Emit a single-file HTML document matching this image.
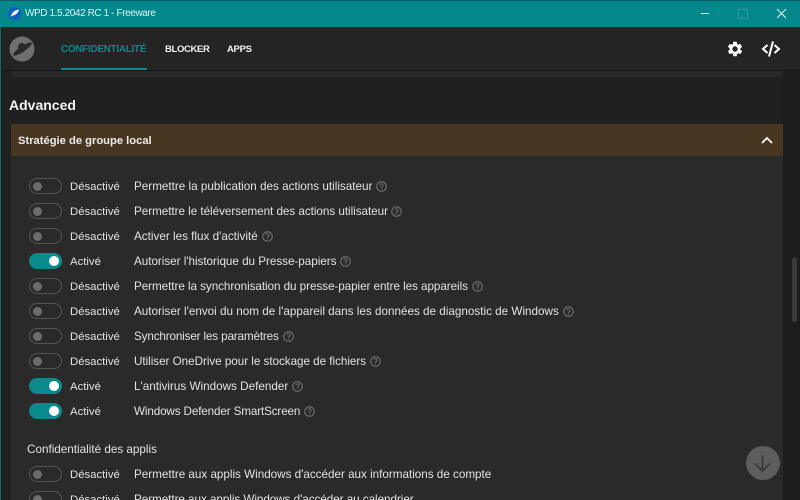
<!DOCTYPE html>
<html lang="fr">
<head>
<meta charset="utf-8">
<title>WPD</title>
<style>
html,body{margin:0;padding:0;width:800px;height:500px;overflow:hidden;background:#1e1e1e;font-family:"Liberation Sans",sans-serif;color:#e6e6e6}
#w{position:relative;width:800px;height:500px;overflow:hidden;background:#1e1e1e}
.a{position:absolute}
.t{position:absolute;white-space:nowrap;font-size:11.7px;line-height:14px;color:#e2e2e2}
.s{font-size:11.35px}
.sw{position:absolute;left:29px;width:33px;height:16px;box-sizing:border-box;border-radius:8px;border:1px solid #555}
.sw i{position:absolute;left:3px;top:2.500px;width:9px;height:9px;border-radius:50%;background:#6c6c6c}
.sw.on{background:#0a8a8c;border-color:#0a8a8c}
.sw.on i{left:19px;top:2px;width:10px;height:10px;background:#fff}
svg{position:absolute;overflow:visible}
</style>
</head>
<body>
<div id="w">
<div class="a" style="left:0;top:0;width:800px;height:27px;background:#05888c"></div>
<div class="a" style="left:0;top:0;width:800px;height:1px;background:#0b5c68"></div>
<svg style="left:8px;top:7px" width="13" height="13" viewBox="0 0 13 13"><circle cx="6.500" cy="6.500" r="6.500" fill="#0f5fc0"/><path d="M2.500 10C3.500 6 6.500 3.200 11 2.500 10 6 7.500 8.500 4.500 8.500Z" fill="#fff"/></svg>
<div class="t" style="left:25px;top:7px;font-size:10px;letter-spacing:-.4px;color:#dff3f3">WPD 1.5.2042 RC 1 - Freeware</div>
<div class="a" style="left:701px;top:13px;width:8px;height:1px;background:#d8eeee"></div>
<div class="a" style="left:738px;top:9px;width:8px;height:8px;border:1px solid #2f9a9d"></div>
<svg style="left:777px;top:9px" width="9" height="9" viewBox="0 0 9 9"><path d="M0 0L9 9M9 0L0 9" stroke="#e2f2f2" stroke-width="1"/></svg>

<div class="a" style="left:0;top:27px;width:800px;height:43px;background:#242424"></div>
<div class="a" style="left:0;top:70px;width:800px;height:1px;background:#171717"></div>
<svg style="left:9px;top:36px" width="26" height="26" viewBox="0 0 26 26"><circle cx="13" cy="13" r="12.500" fill="#6f6f6f"/><ellipse cx="13.500" cy="13" rx="11" ry="2.800" transform="rotate(-34 13.500 13)" fill="#2a2a2a"/><ellipse cx="13" cy="11" rx="4" ry="4" transform="rotate(-34 13 11)" fill="#2a2a2a"/></svg>
<div class="t" style="left:61px;top:43px;font-size:9.800px;letter-spacing:-.2px;font-weight:bold;color:#0a8a8c">CONFIDENTIALITÉ</div>
<div class="a" style="left:61px;top:68px;width:86px;height:2px;background:#0a8a8c"></div>
<div class="t" style="left:165px;top:43px;font-size:9.500px;letter-spacing:-.35px;font-weight:bold;color:#f2f2f2">BLOCKER</div>
<div class="t" style="left:227px;top:43px;font-size:9.500px;letter-spacing:-.3px;font-weight:bold;color:#f2f2f2">APPS</div>
<svg style="left:726px;top:40px" width="18" height="18" viewBox="0 0 24 24"><path fill="#fff" d="M19.140 12.940c.04-.3.06-.61.06-.94s-.02-.64-.07-.94l2.030-1.580a.49.49 0 0 0 .12-.61l-1.920-3.320a.49.49 0 0 0-.59-.22l-2.390.96a7 7 0 0 0-1.620-.94l-.36-2.540a.48.48 0 0 0-.48-.41h-3.840a.48.48 0 0 0-.47.41l-.36 2.540a7.300 7.300 0 0 0-1.620.94l-2.390-.96a.49.49 0 0 0-.59.22L2.740 8.870a.48.48 0 0 0 .12.61l2.030 1.580c-.05.3-.07.62-.07.94s.02.64.07.94l-2.030 1.580a.49.49 0 0 0-.12.61l1.920 3.320c.12.22.37.29.59.22l2.390-.96c.5.380 1.030.7 1.620.94l.36 2.540c.05.24.24.41.48.41h3.840c.24 0 .44-.17.47-.41l.36-2.540a7 7 0 0 0 1.620-.94l2.390.96c.22.08.47 0 .59-.22l1.920-3.320a.48.48 0 0 0-.12-.61l-2.010-1.580zM12 15.600A3.600 3.600 0 1 1 12 8.400a3.600 3.600 0 0 1 0 7.200z"/></svg>
<svg style="left:761px;top:40px" width="20" height="18" viewBox="0 0 20 18"><path d="M6.500 5L2 9l4.500 4M13.500 5L18 9l-4.500 4M12 1.500L8 16.500" fill="none" stroke="#fff" stroke-width="2"/></svg>

<div class="a" style="left:0;top:27px;width:1px;height:473px;background:#0a6a6c"></div>
<div class="a" style="left:1px;top:71px;width:782px;height:429px;background:#202020"></div>
<div class="a" style="left:11px;top:71px;width:772px;height:6px;background:#282828;border-radius:0 0 3px 3px"></div>
<div class="a" style="left:783px;top:71px;width:17px;height:429px;background:#1d1d1d"></div>
<div class="a" style="left:792px;top:257px;width:5px;height:65px;background:#3a3a3a;border-radius:3px"></div>
<div class="t" style="left:9px;top:97px;font-size:14px;line-height:17px;font-weight:bold;color:#f4f4f4">Advanced</div>

<div class="a" style="left:11px;top:124px;width:772px;height:32px;background:#483720"></div>
<div class="t" style="left:18px;top:134px;font-size:11.200px;font-weight:bold;color:#ececec">Stratégie de groupe local</div>
<svg style="left:761px;top:136px" width="12" height="8" viewBox="0 0 12 8"><path d="M1 7L6 2l5 5" fill="none" stroke="#fff" stroke-width="1.700"/></svg>
<div class="a" style="left:11px;top:156px;width:772px;height:344px;background:#2a2a2a"></div>

<div class="sw" style="top:178px"><i></i></div><div class="t s" style="left:70px;top:180px">Désactivé</div><div class="t" style="left:134px;top:180px">Permettre la publication des actions utilisateur</div>
<div class="sw" style="top:203px"><i></i></div><div class="t s" style="left:70px;top:205px">Désactivé</div><div class="t" style="left:134px;top:205px;letter-spacing:-.04px">Permettre le téléversement des actions utilisateur</div>
<div class="sw" style="top:228px"><i></i></div><div class="t s" style="left:70px;top:230px">Désactivé</div><div class="t" style="left:134px;top:230px">Activer les flux d'activité</div>
<div class="sw on" style="top:253px"><i></i></div><div class="t s" style="left:70px;top:255px">Activé</div><div class="t" style="left:134px;top:255px;letter-spacing:-.03px">Autoriser l'historique du Presse-papiers</div>
<div class="sw" style="top:278px"><i></i></div><div class="t s" style="left:70px;top:280px">Désactivé</div><div class="t" style="left:134px;top:280px;letter-spacing:-.06px">Permettre la synchronisation du presse-papier entre les appareils</div>
<div class="sw" style="top:303px"><i></i></div><div class="t s" style="left:70px;top:305px">Désactivé</div><div class="t" style="left:134px;top:305px">Autoriser l'envoi du nom de l'appareil dans les données de diagnostic de Windows</div>
<div class="sw" style="top:328px"><i></i></div><div class="t s" style="left:70px;top:330px">Désactivé</div><div class="t" style="left:134px;top:330px;letter-spacing:-.15px">Synchroniser les paramètres</div>
<div class="sw" style="top:353px"><i></i></div><div class="t s" style="left:70px;top:355px">Désactivé</div><div class="t" style="left:134px;top:355px;letter-spacing:-.04px">Utiliser OneDrive pour le stockage de fichiers</div>
<div class="sw on" style="top:378px"><i></i></div><div class="t s" style="left:70px;top:380px">Activé</div><div class="t" style="left:134px;top:380px">L'antivirus Windows Defender</div>
<div class="sw on" style="top:403px"><i></i></div><div class="t s" style="left:70px;top:405px">Activé</div><div class="t" style="left:134px;top:405px;letter-spacing:-.14px">Windows Defender SmartScreen</div>

<svg style="left:376px;top:181px" width="11" height="11" viewBox="0 0 11 11"><circle cx="5.500" cy="5.500" r="4.800" fill="none" stroke="#777"/><text x="5.500" y="8.500" font-size="8" text-anchor="middle" fill="#888" font-family="Liberation Sans">?</text></svg>
<svg style="left:391px;top:206px" width="11" height="11" viewBox="0 0 11 11"><circle cx="5.500" cy="5.500" r="4.800" fill="none" stroke="#777"/><text x="5.500" y="8.500" font-size="8" text-anchor="middle" fill="#888" font-family="Liberation Sans">?</text></svg>
<svg style="left:262px;top:231px" width="11" height="11" viewBox="0 0 11 11"><circle cx="5.500" cy="5.500" r="4.800" fill="none" stroke="#777"/><text x="5.500" y="8.500" font-size="8" text-anchor="middle" fill="#888" font-family="Liberation Sans">?</text></svg>
<svg style="left:340px;top:256px" width="11" height="11" viewBox="0 0 11 11"><circle cx="5.500" cy="5.500" r="4.800" fill="none" stroke="#777"/><text x="5.500" y="8.500" font-size="8" text-anchor="middle" fill="#888" font-family="Liberation Sans">?</text></svg>
<svg style="left:472px;top:281px" width="11" height="11" viewBox="0 0 11 11"><circle cx="5.500" cy="5.500" r="4.800" fill="none" stroke="#777"/><text x="5.500" y="8.500" font-size="8" text-anchor="middle" fill="#888" font-family="Liberation Sans">?</text></svg>
<svg style="left:563px;top:306px" width="11" height="11" viewBox="0 0 11 11"><circle cx="5.500" cy="5.500" r="4.800" fill="none" stroke="#777"/><text x="5.500" y="8.500" font-size="8" text-anchor="middle" fill="#888" font-family="Liberation Sans">?</text></svg>
<svg style="left:283px;top:331px" width="11" height="11" viewBox="0 0 11 11"><circle cx="5.500" cy="5.500" r="4.800" fill="none" stroke="#777"/><text x="5.500" y="8.500" font-size="8" text-anchor="middle" fill="#888" font-family="Liberation Sans">?</text></svg>
<svg style="left:370px;top:356px" width="11" height="11" viewBox="0 0 11 11"><circle cx="5.500" cy="5.500" r="4.800" fill="none" stroke="#777"/><text x="5.500" y="8.500" font-size="8" text-anchor="middle" fill="#888" font-family="Liberation Sans">?</text></svg>
<svg style="left:292px;top:381px" width="11" height="11" viewBox="0 0 11 11"><circle cx="5.500" cy="5.500" r="4.800" fill="none" stroke="#777"/><text x="5.500" y="8.500" font-size="8" text-anchor="middle" fill="#888" font-family="Liberation Sans">?</text></svg>
<svg style="left:304px;top:406px" width="11" height="11" viewBox="0 0 11 11"><circle cx="5.500" cy="5.500" r="4.800" fill="none" stroke="#777"/><text x="5.500" y="8.500" font-size="8" text-anchor="middle" fill="#888" font-family="Liberation Sans">?</text></svg>

<div class="t" style="left:27px;top:443px">Confidentialité des applis</div>
<div class="sw" style="top:466px"><i></i></div><div class="t s" style="left:70px;top:468px">Désactivé</div><div class="t" style="left:134px;top:468px;letter-spacing:-.015px">Permettre aux applis Windows d'accéder aux informations de compte</div>
<div class="sw" style="top:491px"><i></i></div><div class="t s" style="left:70px;top:493px">Désactivé</div><div class="t" style="left:134px;top:493px;letter-spacing:-.05px">Permettre aux applis Windows d'accéder au calendrier</div>

<svg style="left:746px;top:446px" width="34" height="34" viewBox="0 0 34 34"><circle cx="17" cy="17" r="17" fill="#5d5d5d"/><path d="M16.500 9V25M9 17.500L16.500 25 24 17.500" fill="none" stroke="#383838" stroke-width="1.600"/></svg>
</div>
</body>
</html>
